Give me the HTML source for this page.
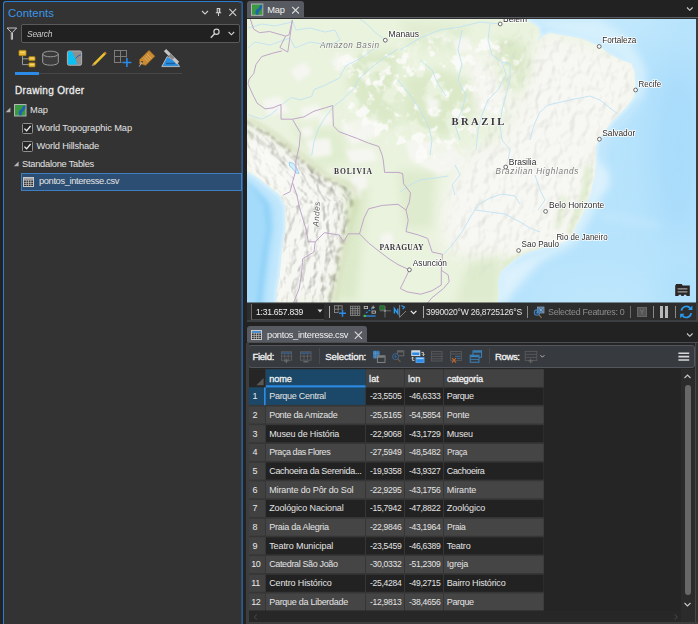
<!DOCTYPE html>
<html><head><meta charset="utf-8"><title>ArcGIS Pro</title>
<style>
html,body{margin:0;padding:0;}
body{width:698px;height:624px;background:#222222;position:relative;overflow:hidden;font-family:"Liberation Sans",sans-serif;font-size:9px;color:#e4e4e4;}
.abs{position:absolute;box-sizing:border-box;}
.t{position:absolute;white-space:nowrap;}
svg{position:absolute;overflow:visible;}
</style></head><body>
<!-- LEFT PANEL -->
<div class="abs" style="left:3px;top:1px;width:240px;height:630px;background:#333333;border:1px solid #2b7fd3;border-right:none;border-radius:3px 3px 0 0;"></div>
<div class="abs" style="left:241px;top:3px;width:1px;height:625px;background:#304e6b;"></div>
<div class="abs" style="left:242px;top:3px;width:1px;height:625px;background:#285e95;"></div>
<div class="abs" style="left:239px;top:1px;width:3px;height:2px;background:#285e95;border-radius:0 3px 0 0;"></div>
<div class="t" style="left:8.00px;top:5.00px;font-size:11.4px;line-height:16px;color:#3a96e8;letter-spacing:0.047px;">Contents</div>
<svg style="left:200px;top:5px" width="40" height="14" viewBox="200 5 40 14"><g fill="none" stroke="#d0d0d0" stroke-width="1.1"><path d="M202 11L205 14L208 11"/><path d="M229.3 8.9L236.2 15.8M236.2 8.9L229.3 15.8"/></g><path d="M216.7 8H220.3V12.3H221.2V13.2H215.8V12.3H216.7Z" fill="#d0d0d0"/><rect x="218" y="13" width="1" height="3" fill="#d0d0d0"/><rect x="217.7" y="9" width="1.2" height="3.2" fill="#555"/></svg>
<svg style="left:6px;top:26px" width="12" height="15" viewBox="6 26 12 15"><path d="M7 28H16.7L12.5 32.4V39.3H11.3V32.4Z" fill="none" stroke="#c4c4c4" stroke-width="1"/></svg>
<div class="abs" style="left:21px;top:24px;width:218.5px;height:18.5px;background:#212121;border:1px solid #5a5a5a;border-radius:2px;"></div>
<div class="t" style="left:27.00px;top:27.00px;font-size:9.3px;line-height:14px;color:#c8c8c8;letter-spacing:-0.300px;font-style:italic;transform:scaleX(0.9145);transform-origin:0 0;">Search</div>
<svg style="left:208px;top:27px" width="30" height="13" viewBox="208 27 30 13"><g fill="none" stroke="#d0d0d0"><circle cx="216.5" cy="31.8" r="2.6" stroke-width="1.2"/><path d="M214.6 33.8L210.8 37.8" stroke-width="1.4"/><path d="M228.6 32L231.4 34.8L234.2 32" stroke-width="1.1"/></g></svg>
<svg style="left:14px;top:48px" width="170" height="22" viewBox="14 48 170 22">
<g fill="none" stroke="#9a9a9a" stroke-width="1"><path d="M22.5 56V64.6H29M22.5 58.8H29"/></g>
<g fill="#e8b830" stroke="#a07810" stroke-width=".6"><rect x="18.9" y="50.3" width="7.2" height="5.4" rx=".8"/><rect x="28.8" y="56.6" width="6.3" height="4.1" rx=".8"/><rect x="28.8" y="62.8" width="6.3" height="4.1" rx=".8"/></g>
<g stroke="#f7e08a" stroke-width=".9"><path d="M20 52.3H25M29.8 58.2H34M29.8 64.4H34"/></g>
<path d="M42.7 54V62.4A7.8 2.8 0 0 0 58.3 62.4V54" fill="#3c3c3c" stroke="#9a9a9a" stroke-width="1"/><ellipse cx="50.5" cy="54" rx="7.8" ry="2.8" fill="#3a3a3a" stroke="#9a9a9a" stroke-width="1"/>
<rect x="67.4" y="51" width="14.2" height="14.2" rx="1.5" fill="#8e8e8e" stroke="#b0b0b0" stroke-width="1"/><path d="M68 51.6H72.3L73.5 55L75.5 58.5L76.3 62L77.5 64.6H68Z" fill="#0cc0f2"/><path d="M75.6 58.5L78 56L81 54.8" fill="none" stroke="#2a5a9a" stroke-width=".9"/>
<path d="M93 63.5L104 52.4L105.8 54.2L94.8 65.2Z" fill="#e8c030"/><path d="M93 63.5L94.8 65.2L91.6 65.9Z" fill="#c9a070"/><path d="M104 52.4L105 51.4L106.8 53.2L105.8 54.2Z" fill="#d88030"/>
<g fill="none" stroke="#7d7d7d" stroke-width="1"><rect x="114.5" y="50.5" width="12" height="12"/><path d="M120.5 50.5V62.5M114.5 56.5H126.5"/></g><rect x="121.5" y="57.5" width="11" height="10.5" fill="#333333"/><path d="M122.4 62.5H131.4M126.9 58V67" stroke="#2b8be6" stroke-width="1.6" fill="none"/>
<path d="M149 50.2L155 56.2L145.8 65.4L139.4 63.8L139.6 59.6Z" fill="#c98a34" stroke="#8a5a1a" stroke-width=".6"/><path d="M147 54L151.5 58.5M145.5 55.8L149.8 60.1M144 57.6L148 61.6" stroke="#e6b870" stroke-width=".8" fill="none"/><circle cx="142" cy="62" r=".9" fill="#333"/><path d="M142 62L139.2 66.6" stroke="#c8c8c8" stroke-width=".8"/>
<path d="M167.2 56.6L161.8 66.6H179.6L176 61Z" fill="#2b8fe0" stroke="#b8b8b8" stroke-width="1"/><path d="M165 50.2L178 63" stroke="#c4c4c4" stroke-width="3.2"/><path d="M169.6 54.8L173.4 58.6" stroke="#8a8a8a" stroke-width="3.4"/><path d="M166 63.5H175" stroke="#1c5fa0" stroke-width="1.5"/>
</svg>
<div class="abs" style="left:15px;top:73.2px;width:167px;height:1.2px;background:#484848;"></div>
<div class="abs" style="left:15px;top:72px;width:24px;height:2.5px;background:#2b8be6;"></div>
<div class="t" style="left:15.00px;top:83.00px;font-size:10px;line-height:15px;color:#ececec;letter-spacing:0.345px;-webkit-text-stroke:0.3px #ececec;">Drawing Order</div>
<svg style="left:5px;top:104px" width="16" height="68" viewBox="5 104 16 68"><path d="M10.4 107.4V112.2H5.6Z" fill="#b4b4b4"/><path d="M18.6 161.4V166.2H13.8Z" fill="#b4b4b4"/></svg>
<svg style="left:14px;top:104px" width="13" height="13" viewBox="14 104 13 13"><rect x="14.5" y="104.5" width="11.5" height="11.5" fill="#3a9a42" stroke="#b4b4b4" stroke-width="1"/><path d="M25.4 105.2L23.2 106L21.8 108.8L19.4 110.4L18.4 113.2L19.6 115.4H21.6L22 112.4L24 110.6L25.4 108Z" fill="#1f62ad"/></svg>
<div class="t" style="left:30.00px;top:103.00px;font-size:9.3px;line-height:14px;color:#e4e4e4;letter-spacing:-0.030px;">Map</div>
<svg style="left:22px;top:123px" width="11" height="11"><rect x=".5" y=".5" width="10" height="10" rx="1" fill="#262626" stroke="#909090" stroke-width="1"/><path d="M2.4 5.6L4.6 7.8L8.6 3" fill="none" stroke="#f0f0f0" stroke-width="1.3"/></svg>
<div class="t" style="left:36.50px;top:121.00px;font-size:9.3px;line-height:14px;color:#e4e4e4;letter-spacing:-0.113px;">World Topographic Map</div>
<svg style="left:22px;top:141px" width="11" height="11"><rect x=".5" y=".5" width="10" height="10" rx="1" fill="#262626" stroke="#909090" stroke-width="1"/><path d="M2.4 5.6L4.6 7.8L8.6 3" fill="none" stroke="#f0f0f0" stroke-width="1.3"/></svg>
<div class="t" style="left:36.50px;top:139.00px;font-size:9.3px;line-height:14px;color:#e4e4e4;letter-spacing:-0.163px;">World Hillshade</div>
<div class="t" style="left:22.00px;top:157.00px;font-size:9.3px;line-height:14px;color:#e4e4e4;letter-spacing:-0.256px;">Standalone Tables</div>
<div class="abs" style="left:21px;top:173px;width:221px;height:18px;background:#2d4e73;border:1px solid #3f7fc0;"></div>
<svg style="left:23px;top:177px" width="11" height="10"><rect x=".5" y=".5" width="10" height="9" fill="#2a2a2a" stroke="#c8c8c8" stroke-width="1"/><rect x="1" y="1" width="9" height="1.8" fill="#a8a8a8"/><path d="M0.5 3.2H10.5M0.5 5.4H10.5M0.5 7.4H10.5M3.2 3V9.5M5.5 3V9.5M7.8 3V9.5" stroke="#c8c8c8" stroke-width=".7" fill="none"/></svg>
<div class="t" style="left:39.00px;top:174.00px;font-size:9.3px;line-height:14px;color:#e4e4e4;letter-spacing:-0.368px;">pontos_interesse.csv</div>
<!-- MAP PANEL -->
<div class="abs" style="left:247px;top:1px;width:57px;height:17px;background:#575a60;border-radius:3px 3px 0 0;"></div>
<svg style="left:251px;top:3px" width="13" height="13" viewBox="251 3 13 13"><rect x="251.5" y="4" width="11.3" height="11.3" fill="#3a9a42" stroke="#b4b4b4" stroke-width="1"/><path d="M262.2 4.6L260 5.4L258.6 8.2L256.2 9.8L255.2 12.6L256.4 14.7H258.4L258.8 11.8L260.8 10L262.2 7.4Z" fill="#1f62ad"/></svg>
<div class="t" style="left:267.30px;top:3.00px;font-size:9.3px;line-height:14px;color:#f0f0f0;letter-spacing:-0.197px;">Map</div>
<svg style="left:291px;top:6px" width="9" height="9" viewBox="291 6 9 9"><path d="M292.2 6.8L298.9 13.5M298.9 6.8L292.2 13.5" stroke="#dcdcdc" stroke-width="1.1" fill="none"/></svg>
<svg style="left:686px;top:6px" width="8" height="6"><path d="M1 1.5L3.8 4.3L6.6 1.5" stroke="#d0d0d0" stroke-width="1.1" fill="none"/></svg>
<div class="abs" style="left:247px;top:17px;width:451px;height:305px;background:#2d2d2d;border-top:1.5px solid #575a60;"></div>
<div class="abs" style="left:696px;top:19px;width:2px;height:303px;background:#3c3c3c;"></div>
<div class="abs" style="left:247px;top:19px;width:449px;height:284px;overflow:hidden;background:#b4e2fc;">
<svg style="left:0;top:0" width="449" height="284" viewBox="247 19 449 284">
<defs>
<filter id="b1" x="-20%" y="-20%" width="140%" height="140%"><feGaussianBlur stdDeviation="1"/></filter>
<filter id="b2" x="-20%" y="-20%" width="140%" height="140%"><feGaussianBlur stdDeviation="2.2"/></filter>
<filter id="b4" x="-30%" y="-30%" width="160%" height="160%"><feGaussianBlur stdDeviation="4"/></filter>
<filter id="b8" x="-30%" y="-30%" width="160%" height="160%"><feGaussianBlur stdDeviation="8"/></filter>
<filter id="b16" x="-50%" y="-50%" width="200%" height="200%"><feGaussianBlur stdDeviation="16"/></filter>
<filter id="relief" x="0" y="0" width="100%" height="100%">
<feTurbulence type="fractalNoise" baseFrequency="0.13 0.07" numOctaves="3" seed="7" result="n"/>
<feDiffuseLighting in="n" surfaceScale="4" diffuseConstant="1.15" lighting-color="#ffffff" result="l"><feDistantLight azimuth="225" elevation="50"/></feDiffuseLighting>
<feColorMatrix in="l" type="matrix" values="0 0 0 0 0.47  0 0 0 0 0.47  0 0 0 0 0.44  -1.2 0 0 0 1.03"/>
</filter>
<filter id="relief2" x="0" y="0" width="100%" height="100%">
<feTurbulence type="fractalNoise" baseFrequency="0.11 0.08" numOctaves="2" seed="3" result="n"/>
<feDiffuseLighting in="n" surfaceScale="3" diffuseConstant="1.15" lighting-color="#ffffff" result="l"><feDistantLight azimuth="225" elevation="55"/></feDiffuseLighting>
<feColorMatrix in="l" type="matrix" values="0 0 0 0 0.45  0 0 0 0 0.45  0 0 0 0 0.42  -1.6 0 0 0 1.5"/>
</filter>
<filter id="speck" x="0" y="0" width="100%" height="100%">
<feTurbulence type="fractalNoise" baseFrequency="0.075" numOctaves="3" seed="11"/>
<feColorMatrix type="matrix" values="0 0 0 0 0.965  0 0 0 0 0.968  0 0 0 0 0.945  9 0 0 0 -5.1"/>
</filter>
<filter id="speckg" x="0" y="0" width="100%" height="100%">
<feTurbulence type="fractalNoise" baseFrequency="0.05" numOctaves="3" seed="23"/>
<feColorMatrix type="matrix" values="0 0 0 0 0.86  0 0 0 0 0.915  0 0 0 0 0.79  0 7 0 0 -3.7"/>
</filter>
<mask id="amz" maskUnits="userSpaceOnUse" x="248" y="19" width="448" height="284"><path d="M336 54L398 44L470 29L500 32L522 50L524 92L498 130L470 146L440 164L404 164L388 146L340 124L337 105Z" fill="#fff" filter="url(#b4)"/></mask>
<filter id="rough" x="-10%" y="-10%" width="120%" height="120%"><feTurbulence type="fractalNoise" baseFrequency="0.12" numOctaves="2" seed="5" result="t"/><feDisplacementMap in="SourceGraphic" in2="t" scale="9" xChannelSelector="R" yChannelSelector="G"/><feGaussianBlur stdDeviation="0.8"/></filter>
<mask id="eastmask" maskUnits="userSpaceOnUse" x="248" y="19" width="448" height="284"><path d="M545 30L640 60L640 100L600 150L600 200L575 245L520 262L470 270L450 250L446 215L455 180L470 150L480 110L472 70L490 45Z" fill="#fff" filter="url(#b8)"/></mask>
<path id="land" d="M246 19H525L532 23L538 27L540 34L538 41L543 36L550 33L560 35L570.8 36.5L584.4 39.5L599.2 46.3L609.5 54.3L620.8 60L631 63.4L634.5 71.4L635.6 89.6L633.4 97.5L625.4 107.8L618.6 114.6L611.7 121.4L604.9 130.5L599.2 138.5L595.8 146.5L595.8 161L594.7 174.7L591.2 190.6L585.4 207.7L581.1 217.2L576 225.8L572.5 234.4L565.6 241.3L558.8 243.8L546.7 246.4L534.7 249.9L524.4 253.3L515.8 258.4L507.2 265.3L500.3 272.2L497.7 282.5L498.6 292.8L497.7 303H276.5L277.6 288.5L279.9 274.8L282.1 252L285.6 229.3L285.6 206.5L279.9 195.1L268.5 186L257 177L246 170Z"/>
<clipPath id="landclip"><use href="#land"/></clipPath>
<clipPath id="andes"><path d="M246 120L273.7 137L290.5 150.5L307 164L326 179L341 184L351 190L353 201L348 218L344 235L341 251.5L337.6 268L334 285L331 303H276L285.6 229L285.6 206L279.9 195L268.5 186L257 177L246 170Z"/></clipPath>
<clipPath id="andesN"><path d="M240 100H360V198L290 206L270 200L240 180Z"/></clipPath>
<clipPath id="andesS"><path d="M270 200L290 206L360 198V310H260Z"/></clipPath>
</defs>
<!-- ocean -->
<rect x="246" y="19" width="452" height="284" fill="#b7e3fc"/>
<g filter="url(#b16)">
<ellipse cx="678" cy="150" rx="28" ry="95" fill="#a8dcfb"/>
<ellipse cx="600" cy="300" rx="60" ry="25" fill="#bde6fc"/>
<ellipse cx="685" cy="290" rx="25" ry="30" fill="#aee0fc"/>
<ellipse cx="600" cy="20" rx="70" ry="18" fill="#c4e9fc"/>
</g>
<!-- pacific -->
<g filter="url(#b4)">
<path d="M240 160L252 176L266 192L274 206L275 230L271 252L268 275L265 305H240Z" fill="#a4dbfa"/>
</g>
<path d="M244 178L256 190L266 204L269 228L265 252L262 276L259 305" fill="none" stroke="#90d1f7" stroke-width="5" filter="url(#b2)"/>
<!-- shelf -->
<use href="#land" fill="none" stroke="#c4e8fc" stroke-width="18" filter="url(#b4)"/>
<use href="#land" fill="none" stroke="#d6f0fd" stroke-width="5" filter="url(#b1)"/>
<g filter="url(#b4)">
<path d="M525 19L600 19L630 40L645 70L642 95L632 100L636 70L600 44L560 32Z" fill="#d6f0fd"/>
<path d="M594 160L608 170L610 185L598 200L590 215L575 240L540 262L515 290L505 303L497 303L500 270L560 244L585 207Z" fill="#dcf2fd"/>
<path d="M600 215L640 222L660 226" stroke="#cdecfd" stroke-width="3" fill="none"/>
</g>
<!-- land -->
<use href="#land" fill="#eaf3de"/>
<g clip-path="url(#landclip)">
<!-- white zones -->
<g filter="url(#b8)" fill="#f7f7f3">
<path d="M545 30L640 60L640 100L600 150L600 200L575 245L520 260L480 262L445 250L440 215L450 180L470 150L500 140L520 100L530 60Z"/>
<path d="M470 50L505 55L512 110L480 120L462 95Z"/>
<path d="M246 116L300 156L340 182L352 200L344 250L332 303H270L285 200L246 172Z"/>
</g>
<!-- mid green -->
<g filter="url(#b4)" fill="#dbe9c9">
<path d="M405 75L440 70L470 80L475 110L450 135L420 138L402 115Z"/>
<path d="M345 55L398 50L398 130L370 120L350 95Z"/>
<path d="M400 20L470 25L460 50L410 48Z" opacity=".6"/>
<path d="M500 35L525 45L530 70L520 90L500 85L495 60Z"/>
<path d="M290 125L340 130L350 160L320 170Z" opacity=".7"/>
<path d="M345 184L368 188L356 300L336 300L348 240Z"/>
<path d="M398 170L435 172L432 228L405 228Z" opacity=".8"/>
<path d="M470 262L500 255L497 303L455 303Z" opacity=".8"/>
</g>
<g filter="url(#b2)" fill="#f5f6f1">
<path d="M290 70L305 62L312 72L298 82Z"/><path d="M330 60L350 52L356 62L338 72Z"/>
<path d="M262 100L280 96L290 112L268 116Z"/><path d="M300 108L318 104L322 116L304 120Z"/>
<path d="M340 125L365 118L380 135L352 145Z"/><path d="M305 140L330 138L332 155L312 158Z"/>
<path d="M425 95L440 100L436 118L428 112Z"/><path d="M452 40L468 36L472 50L458 54Z"/>
<path d="M350 178L362 182L360 200L350 196Z"/><path d="M380 235L392 232L394 246L382 248Z"/>
<path d="M405 140L450 142L470 165L440 175L410 160Z"/>
<path d="M318 116L330 112L334 122L322 126Z"/><path d="M345 150L372 148L378 160L352 164Z"/><path d="M300 128L312 126L314 136L303 138Z"/><path d="M362 120L376 118L380 130L366 133Z"/><path d="M352 176L366 174L368 188L356 190Z"/>
</g>
<g mask="url(#amz)"><rect x="320" y="19" width="220" height="160" filter="url(#speckg)" opacity=".7"/><rect x="320" y="19" width="220" height="160" filter="url(#speck)" opacity=".9"/></g>
<g filter="url(#b2)" fill="#dfeccf"><path d="M585 165L592 168L588 195L580 215L572 232L566 236L574 212L582 190Z"/><path d="M500 262L520 254L545 247L560 245L540 252L520 260L505 270Z"/><path d="M560 195L568 198L562 225L554 230Z" opacity=".7"/></g>
<!-- relief -->
<g clip-path="url(#andes)"><g clip-path="url(#andesN)"><rect x="190" y="50" width="230" height="230" transform="rotate(-42 295 160)" filter="url(#relief)"/></g><g clip-path="url(#andesS)"><rect x="240" y="170" width="140" height="150" transform="rotate(-6 300 250)" filter="url(#relief)"/></g></g>
<g mask="url(#eastmask)"><rect x="420" y="19" width="230" height="270" filter="url(#relief2)" opacity=".3"/></g>
<g clip-path="url(#andes)"><path d="M248 135L268 150L283 170L290 195L292 230L288 260L284 303H270L286 230L280 195L248 171Z" fill="#fbfbf8" opacity=".6" filter="url(#b4)"/></g>
<path d="M246 121L273.7 138L290.5 151.5L307 165L325 179.5L340 185L349 191L351 201L346.5 218L342.5 235L339.5 251.5L336 268L332.5 285L329.5 303" fill="none" stroke="#86866a" stroke-width="3" opacity=".5" stroke-dasharray="9 3 5 2" filter="url(#rough)"/>
<path d="M249 119L276 135L293 148.5L310 162L328 176.5L343 181.5L354 188L357 201L352 218L348 235L345 251.5L341.5 268L338 285L335 303" fill="none" stroke="#c9d6a8" stroke-width="5" opacity=".55" filter="url(#b2)"/>
<path d="M300 168L314 179L328 188L338 202L336 222L332 240L329 256L325 275L321 303" fill="none" stroke="#8c8c78" stroke-width="2.2" opacity=".4" stroke-dasharray="7 4 4 3" filter="url(#rough)"/>
<path d="M248 132L258 139L272 152L286 166" fill="none" stroke="#8c8c78" stroke-width="2.2" opacity=".4" stroke-dasharray="7 4 4 3" filter="url(#rough)"/>
<!-- lake -->
<path d="M289.5 162L293.5 163.5L297 168.5L299 173.5L296 173L292 168L289.5 166Z" fill="#d4edfb" stroke="#8ecbf0" stroke-width=".8"/>
<!-- rivers -->
<g fill="none" stroke="#bde1f4" stroke-width=".85">
<path d="M398 49L384.6 57.7L370.9 67.9L357.3 80.5L355 87.3L343.6 98.7L333.4 106.6L325.4 116.9L318.6 128.3L314 141.9L311.7 155.6"/>
<path d="M375.5 47.5L361.8 57.7L345.9 65.7L339.1 78.2L325.4 85L314 89.6L311.7 96.4L300.4 99.8L291.3 97.5L282.1 104.4"/>
<path d="M292 20L296 30L310 28L325 32L335 30L340 40"/>
<path d="M340 40L330 45L310 42L295 48L290 38L270 45L255 42L248 48"/>
<path d="M400 50L420 38L440 30L460 27L480 22L500 24"/>
<path d="M398 80L410 95L420 110L428 125L432 140L430 155"/>
<path d="M462 30L458 50L462 65L458 80L466 95L462 110L455 125L460 140"/>
<path d="M490 24L488 40L492 55L502 62L506 75L498 90L488 100L482 115L478 130L476 150"/>
<path d="M502 62L510 64L510 80L506 95L502 110L500 125L502 140L510 150L508 160"/>
<path d="M400 192L410 185L420 180L435 178L448 176"/>
<path d="M455 165L460 175L452 185L455 195"/>
<path d="M443 255L452 245L462 232L470 218L478 205L490 198L502 194L515 196L520 204"/>
<path d="M475 210L490 212L505 214L520 222L530 228L540 232"/>
<path d="M535 175L540 190L545 200L538 210"/>
<path d="M548 105L570 100L590 96L600 100L610 108L618 114"/>
<path d="M548 105L540 112L534 125L530 140"/>
<path d="M359.5 19L366.4 23.6L375.5 32.7L384.6 39.5"/>
<path d="M248 114.6L261.7 119.2L270.8 114.6L277.6 108.9"/>
<path d="M420 60L432 70L438 84L446 96"/>
<path d="M248 28L262 24L275 26L292 22"/>
</g>
<!-- borders -->
<g fill="none" stroke="#bfa6c8" stroke-width="1" stroke-linejoin="round">
<path d="M250.3 19L253.7 29.2L259.4 32.7L269.6 31.5L285.6 36.1L289 34.9L292.4 20"/>
<path d="M292.4 20L287.8 52"/>
<path d="M285.6 36.1L279.9 47.5L287.8 52"/>
<path d="M282.1 50.9L273 53.1L261.7 56.6L256 64.5L253.7 73.6L249.1 79.3L248 83.9L252.6 94.1L257.1 103.2L265.1 108.9L273 107.8L281 104.4L281 119.2L292.4 119.2L300.4 132.8L299.2 146.5L295.8 161L296 170L292.4 182.6"/>
<path d="M292.4 119.2L303.8 116.9L314 111.2L325.4 107.8L332.7 105.5L333.4 126L339.1 131.7L348.2 135.1L357.3 138.5L368.6 143.1L378.9 146.5L382.3 155.6L383.4 161L384.6 172.4L398 172.4L402.6 173.5L403.7 183.8L410.5 192.9L409.4 202L406 210L408.2 220.2L406 231.6L418.5 235L427.6 238.4L432.1 252L442.4 254.3L441.3 270.3L448.1 274.8L449.2 281.6L443.5 288.5L432.1 297.6L427.6 303"/>
<path d="M398 264.6L409.4 269.8L404.8 279.4L400.3 288.5L407.1 291.9L420.8 294.2L432.1 290.7L441.3 285L441.3 270.3"/>
<path d="M292.4 182.6L290.1 191.7L283.3 195.1"/>
<path d="M292.4 182.6L296.9 195.1L299.2 206.5L302.6 217.9L306 229.3L308.3 241.8L315.2 241.8L324.3 232.7L339.1 235L343.6 241.8L348.2 233.8L359.5 233.8L364.1 217.9L368.6 208.8L382.3 205.4L398 204.3L406 210"/>
<path d="M359.5 233.8L368.6 243L380 252L389.1 258.9L398 264.6"/>
<path d="M315.2 241.8L314 252L302.6 258.9L301.5 274.8L299.2 288.5L293.5 303"/>
</g>
</g>
<!-- labels -->
<g font-family="'Liberation Sans',sans-serif" fill="#2c2c2c" stroke="#ffffff" stroke-width="1.6" stroke-linejoin="round" paint-order="stroke" font-size="8.6">
<text x="388.6" y="36.9" textLength="30.3" lengthAdjust="spacingAndGlyphs">Manaus</text>
<text x="503" y="21.5" textLength="24" lengthAdjust="spacingAndGlyphs">Belém</text>
<text x="602.2" y="42.9" textLength="34.1" lengthAdjust="spacingAndGlyphs">Fortaleza</text>
<text x="638.6" y="86.6" textLength="22.5" lengthAdjust="spacingAndGlyphs">Recife</text>
<text x="602.2" y="136" textLength="33" lengthAdjust="spacingAndGlyphs">Salvador</text>
<text x="508.8" y="165" textLength="27.6" lengthAdjust="spacingAndGlyphs">Brasilia</text>
<text x="549.1" y="207.7" textLength="55.1" lengthAdjust="spacingAndGlyphs">Belo Horizonte</text>
<text x="556.4" y="239.5" textLength="51.2" lengthAdjust="spacingAndGlyphs">Rio de Janeiro</text>
<text x="521.6" y="247" textLength="37.3" lengthAdjust="spacingAndGlyphs">Sao Paulo</text>
<text x="412.8" y="265.7" textLength="34.2" lengthAdjust="spacingAndGlyphs">Asunción</text>
</g>
<g font-family="'Liberation Sans',sans-serif" font-style="italic" fill="#7a7a7a" stroke="#ffffff" stroke-width="1.2" stroke-opacity=".6" paint-order="stroke" font-size="8.2">
<text x="320" y="48.4" textLength="59" lengthAdjust="spacing">Amazon Basin</text>
<text x="495.5" y="173.9" textLength="82.8" lengthAdjust="spacing">Brazilian Highlands</text>
<text transform="translate(318.6 226.8) rotate(-87)" textLength="25" lengthAdjust="spacing" fill="#5a5a5a">Andes</text>
</g>
<g font-family="'Liberation Serif',serif" font-weight="bold" fill="#3b3540" stroke="#ffffff" stroke-width="1.2" stroke-opacity=".6" paint-order="stroke">
<text x="451.5" y="124.8" font-size="10.6" textLength="52.8" lengthAdjust="spacing">BRAZIL</text>
<text x="334" y="174" font-size="7.6" textLength="38" lengthAdjust="spacing">BOLIVIA</text>
<text x="379.6" y="249.8" font-size="7.6" textLength="44" lengthAdjust="spacing">PARAGUAY</text>
</g>
<g fill="#ffffff" stroke="#5a5a5a" stroke-width=".9">
<circle cx="385.3" cy="40.2" r="1.9"/><circle cx="500.2" cy="24" r="1.9"/><circle cx="599.2" cy="46.5" r="1.9"/>
<circle cx="635.6" cy="90" r="1.9"/><circle cx="599.4" cy="139.2" r="1.9"/><circle cx="505.7" cy="167" r="1.9"/>
<circle cx="545.6" cy="211.4" r="1.9"/><circle cx="518.6" cy="250.5" r="1.9"/><circle cx="409.4" cy="269.8" r="1.9"/>
</g>
</svg></div>
<svg style="left:674px;top:283px" width="17" height="14" viewBox="674 283 17 14"><path d="M675.2 285.4L676.2 284H681.6L682.8 285.4H689.8V296H686.4V294.7H683.8V296H681.2V294.7H678.6V296H675.2Z" fill="#2b2727"/><path d="M677.6 288.8H687.4M677.6 291.8H687.4" stroke="#a0a0a0" stroke-width="1.3"/></svg>
<div class="abs" style="left:247px;top:302px;width:451px;height:1px;background:rgba(40,40,40,.5);"></div>
<div class="abs" style="left:250.5px;top:304px;width:73.5px;height:15.5px;background:#222222;border-left:1px solid #6a6a6a;border-bottom:1px solid #4a4a4a;"></div>
<div class="t" style="left:255.50px;top:304.00px;font-size:9.5px;line-height:15px;color:#f0f0f0;letter-spacing:-0.300px;transform:scaleX(0.9062);transform-origin:0 0;">1:31.657.839</div>
<svg style="left:317px;top:309px" width="6" height="4"><path d="M0.5 0.5H5.5L3 3.5Z" fill="#d8d8d8"/></svg>
<div class="abs" style="left:328.5px;top:305.5px;width:1px;height:12px;background:#a8a8a8;"></div>
<svg style="left:332px;top:304px" width="90" height="16" viewBox="332 304 90 16">
<g fill="none" stroke="#8a8a8a" stroke-width=".9"><rect x="334.5" y="305.8" width="7.6" height="6.8"/><path d="M338.3 305.8V312.6M334.5 309.2H342.1"/></g><rect x="338.6" y="309.6" width="8" height="7.4" fill="#2d2d2d"/><path d="M339 313.2H346M342.5 309.8V316.7" stroke="#2b8be6" stroke-width="1.5"/>
<g fill="none" stroke="#8a8a8a" stroke-width=".8"><rect x="350.4" y="306.2" width="9.4" height="9.2"/><path d="M352.7 306.2V315.4M355.1 306.2V315.4M357.5 306.2V315.4M350.4 308.5H359.8M350.4 310.8H359.8M350.4 313.1H359.8"/></g>
<path d="M365 316H375.6" stroke="#2b8be6" stroke-width="1.3"/><rect x="363.6" y="314.8" width="2.2" height="2.2" fill="#3fbf4f"/><path d="M366 313L373 307.8" stroke="#2b8be6" stroke-width="1.2" stroke-dasharray="2 1.2"/><rect x="364.2" y="306.4" width="3.4" height="2.2" fill="none" stroke="#c0c0c0" stroke-width=".8"/><rect x="372" y="311" width="3.4" height="2.2" fill="none" stroke="#c0c0c0" stroke-width=".8"/><path d="M373.2 305.6V309M371.5 307.3H374.9" stroke="#c0c0c0" stroke-width=".8"/>
<rect x="379.8" y="305.8" width="4.6" height="4.2" fill="#2a6a34" stroke="#358a42" stroke-width=".7"/><path d="M385 306V317.4M380 310.8H391" stroke="#6a6a6a" stroke-width="1"/><circle cx="385" cy="310.8" r="1.2" fill="#8a8a8a"/>
<path d="M394.4 313.6V308.6L397.8 313.6V308.6" fill="none" stroke="#2b9bf0" stroke-width="1.4"/><path d="M399.6 305V317.4L406 311" fill="none" stroke="#8a8a8a" stroke-width=".9"/><path d="M401.4 305.6L404.6 307.2L402.6 309.2" fill="none" stroke="#2b9bf0" stroke-width="1.1"/>
<path d="M410.8 310.8L413.6 313.6L416.4 310.8" fill="none" stroke="#f0f0f0" stroke-width="1.2"/>
</svg>
<div class="abs" style="left:423.3px;top:305.5px;width:1px;height:12px;background:#a8a8a8;"></div>
<div class="abs" style="left:426px;top:304px;width:98px;height:16px;overflow:hidden;"><div class="t" style="left:0.40px;top:0.00px;font-size:9.8px;line-height:15px;color:#e6e6e6;letter-spacing:-0.300px;transform:scaleX(0.8754);transform-origin:0 0;">3990020°W 26,8725126°S</div></div>
<div class="abs" style="left:527px;top:305.5px;width:1px;height:12px;background:#8a8a8a;"></div>
<svg style="left:532px;top:306px" width="13" height="13" viewBox="532 306 13 13"><rect x="537.5" y="307" width="6.5" height="6" fill="#4a6f95" stroke="#8aa8c8" stroke-width=".7"/><path d="M539 308.2L542.6 311.8M542.6 308.2L539 311.8" stroke="#c8d8e8" stroke-width=".6"/><circle cx="537" cy="312.6" r="2.7" fill="none" stroke="#3d7fc0" stroke-width="1.1"/><path d="M539 314.8L541.6 317.8" stroke="#8a6a4a" stroke-width="1.2"/><path d="M535.6 312.6H538.4M537 311.2V314" stroke="#3d7fc0" stroke-width=".7"/></svg>
<div class="t" style="left:548.20px;top:304.00px;font-size:9.8px;line-height:15px;color:#8e8e8e;letter-spacing:-0.300px;transform:scaleX(0.9061);transform-origin:0 0;">Selected Features: 0</div>
<div class="abs" style="left:630px;top:305.5px;width:1px;height:12px;background:#6a6a6a;"></div>
<svg style="left:637px;top:307px" width="10" height="10"><rect x=".5" y=".5" width="9" height="9" fill="#555555" stroke="#666666" stroke-width="1"/><path d="M3 2.5L5 5L7 2.5M5 5V7.6" stroke="#6e6e6e" stroke-width="1.2" fill="none"/></svg>
<div class="abs" style="left:653px;top:305.5px;width:1px;height:12px;background:#8a8a8a;"></div>
<div class="abs" style="left:660px;top:306px;width:3.4px;height:11.5px;background:#b8b8b8;"></div>
<div class="abs" style="left:665px;top:306px;width:3.4px;height:11.5px;background:#b8b8b8;"></div>
<div class="abs" style="left:674.6px;top:305.5px;width:1px;height:12px;background:#8a8a8a;"></div>
<svg style="left:679px;top:304px" width="15" height="15" viewBox="679 304 15 15"><g fill="none" stroke="#2b9bf0" stroke-width="1.7"><path d="M681.4 310.6A5 5 0 0 1 690.4 308.4"/><path d="M691.2 313.2A5 5 0 0 1 682.2 315.4"/></g><path d="M692.4 305.6V310H688Z" fill="#2b9bf0"/><path d="M680.2 318.2V313.8H684.6Z" fill="#2b9bf0"/></svg>
<div class="abs" style="left:247px;top:320px;width:451px;height:2px;background:#3c3f42;"></div>
<div class="abs" style="left:247px;top:322px;width:451px;height:4px;background:#222222;"></div>
<!-- TABLE PANEL -->
<div class="abs" style="left:247px;top:326px;width:120px;height:17px;background:#575a60;border-radius:3px 3px 0 0;"></div>
<svg style="left:251px;top:330px" width="11" height="10"><rect x=".5" y=".5" width="10" height="9" fill="#2a2a2a" stroke="#c8c8c8" stroke-width="1"/><rect x="1" y="1" width="9" height="1.8" fill="#3a8fdc"/><path d="M0.5 3.2H10.5M0.5 5.4H10.5M0.5 7.4H10.5M3.2 3V9.5M5.5 3V9.5M7.8 3V9.5" stroke="#c8c8c8" stroke-width=".7" fill="none"/></svg>
<div class="t" style="left:267.10px;top:328.00px;font-size:9.3px;line-height:14px;color:#f0f0f0;letter-spacing:-0.318px;">pontos_interesse.csv</div>
<svg style="left:354px;top:331px" width="9" height="9" viewBox="354 331 9 9"><path d="M354.8 331.6L362 338.8M362 331.6L354.8 338.8" stroke="#dcdcdc" stroke-width="1.1" fill="none"/></svg>
<svg style="left:686px;top:332px" width="8" height="6"><path d="M1 1.5L3.8 4.3L6.6 1.5" stroke="#d0d0d0" stroke-width="1.1" fill="none"/></svg>
<div class="abs" style="left:247px;top:342px;width:451px;height:282px;background:#252525;border-top:1.5px solid #4a4d52;border-left:1px solid #3a3a3a;"></div>
<div class="abs" style="left:248px;top:345px;width:447px;height:22.5px;background:#373b40;border:1px solid #52565c;border-radius:3px;"></div>
<div class="t" style="left:252.50px;top:349.00px;font-size:9.6px;line-height:15px;color:#f4f4f4;letter-spacing:-0.329px;-webkit-text-stroke:0.3px #f4f4f4;">Field:</div>
<div class="t" style="left:325.20px;top:349.00px;font-size:9.6px;line-height:15px;color:#f4f4f4;letter-spacing:-0.116px;-webkit-text-stroke:0.3px #f4f4f4;">Selection:</div>
<div class="t" style="left:495.10px;top:349.00px;font-size:9.6px;line-height:15px;color:#f4f4f4;letter-spacing:-0.434px;-webkit-text-stroke:0.3px #f4f4f4;">Rows:</div>
<div class="abs" style="left:319.3px;top:348px;width:1px;height:16px;background:#4a4a4a;"></div>
<div class="abs" style="left:488.6px;top:348px;width:1px;height:16px;background:#4a4a4a;"></div>
<svg style="left:278px;top:348px" width="270" height="17" viewBox="278 348 270 17">
<g fill="none" stroke="#5e5e5e" stroke-width=".9"><rect x="281.5" y="351.8" width="10" height="8.4"/><path d="M281.5 356.2H291.5M284.8 354V360.2M288.2 354V360.2"/><rect x="300.5" y="351.8" width="10.5" height="8.4"/><path d="M300.5 356.2H311M304 354V360.2M307.5 354V360.2"/></g>
<rect x="282" y="352.3" width="9" height="1.6" fill="#3a5f85"/><rect x="301" y="352.3" width="9.5" height="1.6" fill="#3a5f85"/>
<path d="M284 361H288.6M286.3 358.8V363.2" stroke="#707070" stroke-width="1"/><path d="M303.4 361.8H308.4" stroke="#707070" stroke-width="1.2"/>
<rect x="373" y="350.8" width="6.6" height="7.6" fill="#3a7ab5"/><path d="M373 353.2H379.6M375.2 350.8V358.4" stroke="#6aa0d0" stroke-width=".6"/>
<rect x="377.4" y="355.8" width="7.6" height="6.6" fill="#373b40" stroke="#8a8a8a" stroke-width=".9"/><rect x="377.8" y="356.2" width="6.8" height="1.4" fill="#8a8a8a"/>
<rect x="397.4" y="350.8" width="6.4" height="5" fill="#3a3a3a" stroke="#6a6a6a" stroke-width=".9"/><rect x="397.8" y="351.2" width="5.6" height="1.2" fill="#6a6a6a"/><circle cx="395.6" cy="356.6" r="3" fill="#373b40" stroke="#3a6a9a" stroke-width="1"/><path d="M394 356.6H397.2M395.6 355V358.2" stroke="#3a6a9a" stroke-width=".7"/><path d="M397.8 358.8L400.4 361.8" stroke="#7a5a3a" stroke-width="1.2"/>
<rect x="411.8" y="350.8" width="8" height="4.8" fill="#2b8be6" stroke="#e8e8e8" stroke-width=".9"/><rect x="412.2" y="351.2" width="7.2" height="1.2" fill="#e8e8e8"/>
<rect x="416" y="357.6" width="8" height="4.8" fill="#2b8be6" stroke="#5aa8f0" stroke-width=".9"/><rect x="416.4" y="358" width="7.2" height="1.2" fill="#9fd0ff"/>
<path d="M421.4 352.4H423.4V355.4M422.2 354.4L423.4 355.6L424.6 354.4" fill="none" stroke="#e8e8e8" stroke-width=".8"/><path d="M414.4 360.4H412.6V357.4M411.4 358.4L412.6 357.2L413.8 358.4" fill="none" stroke="#e8e8e8" stroke-width=".8"/>
<g fill="none" stroke="#5a5a5a" stroke-width=".9"><rect x="431.4" y="351.6" width="10.6" height="9.4"/><path d="M431.4 354H442M431.4 356.4H442M431.4 358.8H442"/></g>
<g fill="none" stroke="#5a5a5a" stroke-width=".9"><rect x="450.6" y="351.6" width="10.8" height="9"/><path d="M450.6 354H461.4"/></g><path d="M455 356.4H460.6M457 358.6H460.6" stroke="#3a6a9a" stroke-width="1"/><path d="M452 358L456 362.6M456 358L452 362.6" stroke="#c86a28" stroke-width="1.1"/>
<rect x="473" y="350.8" width="8.6" height="6.4" fill="#373b40" stroke="#3a8ac8" stroke-width=".9"/><rect x="473.4" y="351.2" width="7.8" height="1.4" fill="#3a8ac8"/>
<rect x="470.2" y="355.2" width="8.8" height="7" fill="#373b40" stroke="#3a8ac8" stroke-width=".9"/><rect x="470.6" y="355.6" width="8" height="1.5" fill="#3a8ac8"/><path d="M470.6 359.4H478.6" stroke="#3a8ac8" stroke-width=".8"/>
<g fill="none" stroke="#5a5a5a" stroke-width=".9"><rect x="525.2" y="351.4" width="11.6" height="9"/><path d="M525.2 354.4H536.8M525.2 357.4H536.8"/></g><path d="M528.4 361H533M530.7 358.8V363.2" stroke="#6a6a6a" stroke-width="1"/>
<path d="M540.4 355.2L542.4 357.2L544.4 355.2" fill="none" stroke="#b0b0b0" stroke-width="1"/>
</svg>
<svg style="left:678px;top:352px" width="12" height="10"><path d="M0.4 1.2H11.2M0.4 4.6H11.2M0.4 8H11.2" stroke="#d8d8d8" stroke-width="1.6"/></svg>
<svg style="left:0;top:0" width="698" height="624" viewBox="0 0 698 624"><rect x="249.00" y="369.30" width="295.00" height="241.00" fill="#363636"/><rect x="249.00" y="369.30" width="16.00" height="18.30" fill="#252525"/><path d="M256.3 385.3L263.6 378V385.3Z" fill="#585858"/><rect x="266.00" y="369.30" width="99.50" height="18.40" fill="#1b4868"/><rect x="266.00" y="385.30" width="99.50" height="2.20" fill="#2b8be6"/><rect x="366.00" y="369.30" width="38.00" height="17.60" fill="#424242"/><rect x="405.00" y="369.30" width="38.00" height="17.60" fill="#424242"/><rect x="444.00" y="369.30" width="99.50" height="17.60" fill="#424242"/><rect x="249.00" y="387.35" width="16.00" height="17.50" fill="#1b4868"/><rect x="264.00" y="387.35" width="1.70" height="17.80" fill="#2b8be6"/><rect x="266.00" y="387.85" width="99.00" height="17.00" fill="#1b4868"/><rect x="366.00" y="387.85" width="38.00" height="17.00" fill="#222222"/><rect x="405.00" y="387.85" width="38.00" height="17.00" fill="#222222"/><rect x="444.00" y="387.85" width="99.50" height="17.00" fill="#222222"/><rect x="249.00" y="406.54" width="16.00" height="17.00" fill="#414141"/><rect x="266.00" y="406.54" width="99.00" height="17.00" fill="#454545"/><rect x="366.00" y="406.54" width="38.00" height="17.00" fill="#454545"/><rect x="405.00" y="406.54" width="38.00" height="17.00" fill="#454545"/><rect x="444.00" y="406.54" width="99.50" height="17.00" fill="#454545"/><rect x="249.00" y="425.23" width="16.00" height="17.00" fill="#414141"/><rect x="266.00" y="425.23" width="99.00" height="17.00" fill="#222222"/><rect x="366.00" y="425.23" width="38.00" height="17.00" fill="#222222"/><rect x="405.00" y="425.23" width="38.00" height="17.00" fill="#222222"/><rect x="444.00" y="425.23" width="99.50" height="17.00" fill="#222222"/><rect x="249.00" y="443.92" width="16.00" height="17.00" fill="#414141"/><rect x="266.00" y="443.92" width="99.00" height="17.00" fill="#454545"/><rect x="366.00" y="443.92" width="38.00" height="17.00" fill="#454545"/><rect x="405.00" y="443.92" width="38.00" height="17.00" fill="#454545"/><rect x="444.00" y="443.92" width="99.50" height="17.00" fill="#454545"/><rect x="249.00" y="462.61" width="16.00" height="17.00" fill="#414141"/><rect x="266.00" y="462.61" width="99.00" height="17.00" fill="#222222"/><rect x="366.00" y="462.61" width="38.00" height="17.00" fill="#222222"/><rect x="405.00" y="462.61" width="38.00" height="17.00" fill="#222222"/><rect x="444.00" y="462.61" width="99.50" height="17.00" fill="#222222"/><rect x="249.00" y="481.30" width="16.00" height="17.00" fill="#414141"/><rect x="266.00" y="481.30" width="99.00" height="17.00" fill="#454545"/><rect x="366.00" y="481.30" width="38.00" height="17.00" fill="#454545"/><rect x="405.00" y="481.30" width="38.00" height="17.00" fill="#454545"/><rect x="444.00" y="481.30" width="99.50" height="17.00" fill="#454545"/><rect x="249.00" y="499.99" width="16.00" height="17.00" fill="#414141"/><rect x="266.00" y="499.99" width="99.00" height="17.00" fill="#222222"/><rect x="366.00" y="499.99" width="38.00" height="17.00" fill="#222222"/><rect x="405.00" y="499.99" width="38.00" height="17.00" fill="#222222"/><rect x="444.00" y="499.99" width="99.50" height="17.00" fill="#222222"/><rect x="249.00" y="518.68" width="16.00" height="17.00" fill="#414141"/><rect x="266.00" y="518.68" width="99.00" height="17.00" fill="#454545"/><rect x="366.00" y="518.68" width="38.00" height="17.00" fill="#454545"/><rect x="405.00" y="518.68" width="38.00" height="17.00" fill="#454545"/><rect x="444.00" y="518.68" width="99.50" height="17.00" fill="#454545"/><rect x="249.00" y="537.37" width="16.00" height="17.00" fill="#414141"/><rect x="266.00" y="537.37" width="99.00" height="17.00" fill="#222222"/><rect x="366.00" y="537.37" width="38.00" height="17.00" fill="#222222"/><rect x="405.00" y="537.37" width="38.00" height="17.00" fill="#222222"/><rect x="444.00" y="537.37" width="99.50" height="17.00" fill="#222222"/><rect x="249.00" y="556.06" width="16.00" height="17.00" fill="#414141"/><rect x="266.00" y="556.06" width="99.00" height="17.00" fill="#454545"/><rect x="366.00" y="556.06" width="38.00" height="17.00" fill="#454545"/><rect x="405.00" y="556.06" width="38.00" height="17.00" fill="#454545"/><rect x="444.00" y="556.06" width="99.50" height="17.00" fill="#454545"/><rect x="249.00" y="574.75" width="16.00" height="17.00" fill="#414141"/><rect x="266.00" y="574.75" width="99.00" height="17.00" fill="#222222"/><rect x="366.00" y="574.75" width="38.00" height="17.00" fill="#222222"/><rect x="405.00" y="574.75" width="38.00" height="17.00" fill="#222222"/><rect x="444.00" y="574.75" width="99.50" height="17.00" fill="#222222"/><rect x="249.00" y="593.44" width="16.00" height="17.00" fill="#414141"/><rect x="266.00" y="593.44" width="99.00" height="17.00" fill="#454545"/><rect x="366.00" y="593.44" width="38.00" height="17.00" fill="#454545"/><rect x="405.00" y="593.44" width="38.00" height="17.00" fill="#454545"/><rect x="444.00" y="593.44" width="99.50" height="17.00" fill="#454545"/></svg>
<div class="t" style="left:269.20px;top:372.00px;font-size:9.2px;line-height:14px;color:#f2f2f2;letter-spacing:-0.128px;-webkit-text-stroke:0.3px #f2f2f2;">nome</div>
<div class="t" style="left:369.00px;top:372.00px;font-size:9.2px;line-height:14px;color:#f2f2f2;letter-spacing:0.095px;-webkit-text-stroke:0.3px #f2f2f2;">lat</div>
<div class="t" style="left:408.00px;top:372.00px;font-size:9.2px;line-height:14px;color:#f2f2f2;letter-spacing:0.008px;-webkit-text-stroke:0.3px #f2f2f2;">lon</div>
<div class="t" style="left:447.00px;top:372.00px;font-size:9.2px;line-height:14px;color:#f2f2f2;letter-spacing:-0.205px;-webkit-text-stroke:0.3px #f2f2f2;">categoria</div>
<div class="t" style="left:252.60px;top:389.00px;font-size:9px;line-height:14px;color:#e8e8e8;letter-spacing:-0.350px;">1</div>
<div class="t" style="left:269.20px;top:389.00px;font-size:9px;line-height:14px;color:#e4e4e4;letter-spacing:-0.281px;">Parque Central</div>
<div class="t" style="left:369.60px;top:389.00px;font-size:9px;line-height:14px;color:#e4e4e4;letter-spacing:-0.300px;transform:scaleX(0.9509);transform-origin:0 0;">-23,5505</div>
<div class="t" style="left:408.50px;top:389.00px;font-size:9px;line-height:14px;color:#e4e4e4;letter-spacing:-0.300px;transform:scaleX(0.9509);transform-origin:0 0;">-46,6333</div>
<div class="t" style="left:446.80px;top:389.00px;font-size:9px;line-height:14px;color:#e4e4e4;letter-spacing:-0.387px;">Parque</div>
<div class="t" style="left:252.60px;top:408.00px;font-size:9px;line-height:14px;color:#e8e8e8;letter-spacing:-0.350px;">2</div>
<div class="t" style="left:269.20px;top:408.00px;font-size:9px;line-height:14px;color:#e4e4e4;letter-spacing:-0.303px;">Ponte da Amizade</div>
<div class="t" style="left:369.60px;top:408.00px;font-size:9px;line-height:14px;color:#e4e4e4;letter-spacing:-0.300px;transform:scaleX(0.9509);transform-origin:0 0;">-25,5165</div>
<div class="t" style="left:408.50px;top:408.00px;font-size:9px;line-height:14px;color:#e4e4e4;letter-spacing:-0.300px;transform:scaleX(0.9509);transform-origin:0 0;">-54,5854</div>
<div class="t" style="left:446.80px;top:408.00px;font-size:9px;line-height:14px;color:#e4e4e4;letter-spacing:-0.204px;">Ponte</div>
<div class="t" style="left:252.60px;top:427.00px;font-size:9px;line-height:14px;color:#e8e8e8;letter-spacing:-0.350px;">3</div>
<div class="t" style="left:269.20px;top:427.00px;font-size:9px;line-height:14px;color:#e4e4e4;letter-spacing:-0.149px;">Museu de História</div>
<div class="t" style="left:369.60px;top:427.00px;font-size:9px;line-height:14px;color:#e4e4e4;letter-spacing:-0.300px;transform:scaleX(0.9509);transform-origin:0 0;">-22,9068</div>
<div class="t" style="left:408.50px;top:427.00px;font-size:9px;line-height:14px;color:#e4e4e4;letter-spacing:-0.300px;transform:scaleX(0.9509);transform-origin:0 0;">-43,1729</div>
<div class="t" style="left:446.80px;top:427.00px;font-size:9px;line-height:14px;color:#e4e4e4;letter-spacing:-0.202px;">Museu</div>
<div class="t" style="left:252.60px;top:445.00px;font-size:9px;line-height:14px;color:#e8e8e8;letter-spacing:-0.350px;">4</div>
<div class="t" style="left:269.20px;top:445.00px;font-size:9px;line-height:14px;color:#e4e4e4;letter-spacing:-0.439px;">Praça das Flores</div>
<div class="t" style="left:369.60px;top:445.00px;font-size:9px;line-height:14px;color:#e4e4e4;letter-spacing:-0.300px;transform:scaleX(0.9509);transform-origin:0 0;">-27,5949</div>
<div class="t" style="left:408.50px;top:445.00px;font-size:9px;line-height:14px;color:#e4e4e4;letter-spacing:-0.300px;transform:scaleX(0.9509);transform-origin:0 0;">-48,5482</div>
<div class="t" style="left:446.80px;top:445.00px;font-size:9px;line-height:14px;color:#e4e4e4;letter-spacing:-0.300px;transform:scaleX(0.9087);transform-origin:0 0;">Praça</div>
<div class="t" style="left:252.60px;top:464.00px;font-size:9px;line-height:14px;color:#e8e8e8;letter-spacing:-0.350px;">5</div>
<div class="t" style="left:269.20px;top:464.00px;font-size:9px;line-height:14px;color:#e4e4e4;letter-spacing:-0.302px;">Cachoeira da Serenida...</div>
<div class="t" style="left:369.60px;top:464.00px;font-size:9px;line-height:14px;color:#e4e4e4;letter-spacing:-0.300px;transform:scaleX(0.9509);transform-origin:0 0;">-19,9358</div>
<div class="t" style="left:408.50px;top:464.00px;font-size:9px;line-height:14px;color:#e4e4e4;letter-spacing:-0.300px;transform:scaleX(0.9509);transform-origin:0 0;">-43,9327</div>
<div class="t" style="left:446.80px;top:464.00px;font-size:9px;line-height:14px;color:#e4e4e4;letter-spacing:-0.369px;">Cachoeira</div>
<div class="t" style="left:252.60px;top:483.00px;font-size:9px;line-height:14px;color:#e8e8e8;letter-spacing:-0.350px;">6</div>
<div class="t" style="left:269.20px;top:483.00px;font-size:9px;line-height:14px;color:#e4e4e4;letter-spacing:-0.131px;">Mirante do Pôr do Sol</div>
<div class="t" style="left:369.60px;top:483.00px;font-size:9px;line-height:14px;color:#e4e4e4;letter-spacing:-0.300px;transform:scaleX(0.9509);transform-origin:0 0;">-22,9295</div>
<div class="t" style="left:408.50px;top:483.00px;font-size:9px;line-height:14px;color:#e4e4e4;letter-spacing:-0.300px;transform:scaleX(0.9509);transform-origin:0 0;">-43,1756</div>
<div class="t" style="left:446.80px;top:483.00px;font-size:9px;line-height:14px;color:#e4e4e4;letter-spacing:-0.073px;">Mirante</div>
<div class="t" style="left:252.60px;top:501.00px;font-size:9px;line-height:14px;color:#e8e8e8;letter-spacing:-0.350px;">7</div>
<div class="t" style="left:269.20px;top:501.00px;font-size:9px;line-height:14px;color:#e4e4e4;letter-spacing:-0.119px;">Zoológico Nacional</div>
<div class="t" style="left:369.60px;top:501.00px;font-size:9px;line-height:14px;color:#e4e4e4;letter-spacing:-0.300px;transform:scaleX(0.9509);transform-origin:0 0;">-15,7942</div>
<div class="t" style="left:408.50px;top:501.00px;font-size:9px;line-height:14px;color:#e4e4e4;letter-spacing:-0.300px;transform:scaleX(0.9509);transform-origin:0 0;">-47,8822</div>
<div class="t" style="left:446.80px;top:501.00px;font-size:9px;line-height:14px;color:#e4e4e4;letter-spacing:-0.058px;">Zoológico</div>
<div class="t" style="left:252.60px;top:520.00px;font-size:9px;line-height:14px;color:#e8e8e8;letter-spacing:-0.350px;">8</div>
<div class="t" style="left:269.20px;top:520.00px;font-size:9px;line-height:14px;color:#e4e4e4;letter-spacing:-0.246px;">Praia da Alegria</div>
<div class="t" style="left:369.60px;top:520.00px;font-size:9px;line-height:14px;color:#e4e4e4;letter-spacing:-0.300px;transform:scaleX(0.9509);transform-origin:0 0;">-22,9846</div>
<div class="t" style="left:408.50px;top:520.00px;font-size:9px;line-height:14px;color:#e4e4e4;letter-spacing:-0.300px;transform:scaleX(0.9509);transform-origin:0 0;">-43,1964</div>
<div class="t" style="left:446.80px;top:520.00px;font-size:9px;line-height:14px;color:#e4e4e4;letter-spacing:-0.300px;transform:scaleX(0.9483);transform-origin:0 0;">Praia</div>
<div class="t" style="left:252.60px;top:539.00px;font-size:9px;line-height:14px;color:#e8e8e8;letter-spacing:-0.350px;">9</div>
<div class="t" style="left:269.20px;top:539.00px;font-size:9px;line-height:14px;color:#e4e4e4;letter-spacing:-0.095px;">Teatro Municipal</div>
<div class="t" style="left:369.60px;top:539.00px;font-size:9px;line-height:14px;color:#e4e4e4;letter-spacing:-0.300px;transform:scaleX(0.9509);transform-origin:0 0;">-23,5459</div>
<div class="t" style="left:408.50px;top:539.00px;font-size:9px;line-height:14px;color:#e4e4e4;letter-spacing:-0.300px;transform:scaleX(0.9509);transform-origin:0 0;">-46,6389</div>
<div class="t" style="left:446.80px;top:539.00px;font-size:9px;line-height:14px;color:#e4e4e4;letter-spacing:-0.235px;">Teatro</div>
<div class="t" style="left:251.20px;top:557.00px;font-size:9px;line-height:14px;color:#e8e8e8;letter-spacing:-0.350px;">10</div>
<div class="t" style="left:269.20px;top:557.00px;font-size:9px;line-height:14px;color:#e4e4e4;letter-spacing:-0.361px;">Catedral São João</div>
<div class="t" style="left:369.60px;top:557.00px;font-size:9px;line-height:14px;color:#e4e4e4;letter-spacing:-0.300px;transform:scaleX(0.9509);transform-origin:0 0;">-30,0332</div>
<div class="t" style="left:408.50px;top:557.00px;font-size:9px;line-height:14px;color:#e4e4e4;letter-spacing:-0.300px;transform:scaleX(0.9509);transform-origin:0 0;">-51,2309</div>
<div class="t" style="left:446.80px;top:557.00px;font-size:9px;line-height:14px;color:#e4e4e4;letter-spacing:-0.202px;">Igreja</div>
<div class="t" style="left:251.20px;top:576.00px;font-size:9px;line-height:14px;color:#e8e8e8;letter-spacing:-0.327px;">11</div>
<div class="t" style="left:269.20px;top:576.00px;font-size:9px;line-height:14px;color:#e4e4e4;letter-spacing:-0.126px;">Centro Histórico</div>
<div class="t" style="left:369.60px;top:576.00px;font-size:9px;line-height:14px;color:#e4e4e4;letter-spacing:-0.300px;transform:scaleX(0.9509);transform-origin:0 0;">-25,4284</div>
<div class="t" style="left:408.50px;top:576.00px;font-size:9px;line-height:14px;color:#e4e4e4;letter-spacing:-0.300px;transform:scaleX(0.9509);transform-origin:0 0;">-49,2715</div>
<div class="t" style="left:446.80px;top:576.00px;font-size:9px;line-height:14px;color:#e4e4e4;letter-spacing:-0.176px;">Bairro Histórico</div>
<div class="t" style="left:251.20px;top:595.00px;font-size:9px;line-height:14px;color:#e8e8e8;letter-spacing:-0.350px;">12</div>
<div class="t" style="left:269.20px;top:595.00px;font-size:9px;line-height:14px;color:#e4e4e4;letter-spacing:-0.277px;">Parque da Liberdade</div>
<div class="t" style="left:369.60px;top:595.00px;font-size:9px;line-height:14px;color:#e4e4e4;letter-spacing:-0.300px;transform:scaleX(0.9509);transform-origin:0 0;">-12,9813</div>
<div class="t" style="left:408.50px;top:595.00px;font-size:9px;line-height:14px;color:#e4e4e4;letter-spacing:-0.300px;transform:scaleX(0.9509);transform-origin:0 0;">-38,4656</div>
<div class="t" style="left:446.80px;top:595.00px;font-size:9px;line-height:14px;color:#e4e4e4;letter-spacing:-0.353px;">Parque</div>
<div class="abs" style="left:249px;top:611px;width:432px;height:11.4px;background:#272727;"></div>
<div class="abs" style="left:681px;top:369px;width:14px;height:254px;background:#2b2b2b;"></div>
<div class="abs" style="left:695px;top:343px;width:3px;height:281px;background:#303030;border-left:1px solid #464646;"></div>
<div class="abs" style="left:684.5px;top:384.5px;width:6.5px;height:210.5px;background:#686868;border-radius:3.2px;"></div>
<svg style="left:683.3px;top:372.5px" width="9" height="7"><path d="M1.5 5L4.5 2L7.5 5" fill="none" stroke="#c8c8c8" stroke-width="1.1"/></svg>
<svg style="left:683.3px;top:601px" width="9" height="7"><path d="M1.5 2L4.5 5L7.5 2" fill="none" stroke="#c8c8c8" stroke-width="1.1"/></svg>
<svg style="left:253px;top:613px" width="6" height="8"><path d="M3.9 1.5L1.2 4L3.9 6.5" fill="none" stroke="#4a4a4a" stroke-width="1"/></svg>
<svg style="left:673px;top:613px" width="6" height="8"><path d="M1.6 1.5L4.3 4L1.6 6.5" fill="none" stroke="#4a4a4a" stroke-width="1"/></svg>
<div class="abs" style="left:246px;top:622.4px;width:452px;height:1.6px;background:#3d3d3d;"></div>
<div class="abs" style="left:246px;top:343px;width:3px;height:281px;background:#3d3d3d;"></div>
</body></html>
